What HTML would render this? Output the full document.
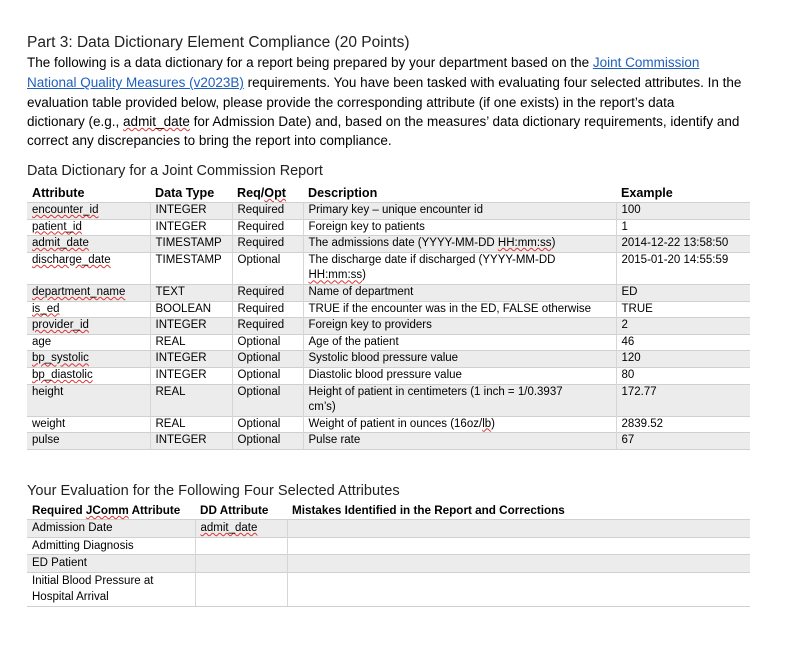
<!DOCTYPE html>
<html><head><meta charset="utf-8"><style>
body{margin:0;background:#fff;width:787px;height:652px;position:relative;font-family:"Liberation Sans",Arial,sans-serif;color:#000;overflow:hidden}
.l{position:absolute;left:27px;white-space:nowrap;font-size:13.5px}
a{color:#1f5fbf;text-decoration:underline}
.sq{text-decoration:underline wavy #d33;text-decoration-thickness:1px}
table{position:absolute;left:27px;border-collapse:collapse;table-layout:fixed;font-size:11.5px}
td,th{padding:0 5px;vertical-align:top;text-align:left;line-height:15.6px;border-right:1px solid #d6d6d6;white-space:nowrap}
td>*,td{position:relative}
.t td{top:0}
td:last-child,th:last-child{border-right:none}
th{font-size:12.6px;font-weight:bold;border:none;line-height:18px}
tr.r td{border-top:1px solid #d0d0d0}
tr.g td{background:#ececec}
table tr:last-child td{border-bottom:1px solid #d0d0d0}
.in{display:block;position:relative;top:1px}
.e td{line-height:16.5px}
</style></head><body>
<div class="l" style="top:34px;font-size:15.5px;color:#222">Part 3: Data Dictionary Element Compliance (20 Points)</div>
<div class="l" style="top:55px">The following is a data dictionary for a report being prepared by your department based on the <a>Joint Commission</a></div>
<div class="l" style="top:75px"><a>National Quality Measures (v2023B)</a> requirements. You have been tasked with evaluating four selected attributes. In the</div>
<div class="l" style="top:95px">evaluation table provided below, please provide the corresponding attribute (if one exists) in the report’s data</div>
<div class="l" style="top:114px">dictionary (e.g., <span class="sq">admit_date</span> for Admission Date) and, based on the measures’ data dictionary requirements, identify and</div>
<div class="l" style="top:133px">correct any discrepancies to bring the report into compliance.</div>

<div class="l" style="top:163px;font-size:14.4px;color:#222">Data Dictionary for a Joint Commission Report</div>
<table style="top:184px;width:723px">
<colgroup><col style="width:123px"><col style="width:82px"><col style="width:71px"><col style="width:313px"><col style="width:134px"></colgroup>
<tr><th>Attribute</th><th>Data Type</th><th>Req/<span class="sq">Opt</span></th><th>Description</th><th>Example</th></tr>
<tr class="r g"><td><span class="sq">encounter_id</span></td><td>INTEGER</td><td>Required</td><td>Primary key – unique encounter id</td><td>100</td></tr>
<tr class="r"><td><span class="sq">patient_id</span></td><td>INTEGER</td><td>Required</td><td>Foreign key to patients</td><td>1</td></tr>
<tr class="r g"><td><span class="sq">admit_date</span></td><td>TIMESTAMP</td><td>Required</td><td>The admissions date (YYYY-MM-DD <span class="sq">HH:mm:ss</span>)</td><td>2014-12-22 13:58:50</td></tr>
<tr class="r"><td><span class="sq">discharge_date</span></td><td>TIMESTAMP</td><td>Optional</td><td>The discharge date if discharged (YYYY-MM-DD<br><span class="sq">HH:mm:ss</span>)</td><td>2015-01-20 14:55:59</td></tr>
<tr class="r g"><td><span class="sq">department_name</span></td><td>TEXT</td><td>Required</td><td>Name of department</td><td>ED</td></tr>
<tr class="r"><td><span class="sq">is_ed</span></td><td>BOOLEAN</td><td>Required</td><td>TRUE if the encounter was in the ED, FALSE otherwise</td><td>TRUE</td></tr>
<tr class="r g"><td><span class="sq">provider_id</span></td><td>INTEGER</td><td>Required</td><td>Foreign key to providers</td><td>2</td></tr>
<tr class="r"><td>age</td><td>REAL</td><td>Optional</td><td>Age of the patient</td><td>46</td></tr>
<tr class="r g"><td><span class="sq">bp_systolic</span></td><td>INTEGER</td><td>Optional</td><td>Systolic blood pressure value</td><td>120</td></tr>
<tr class="r"><td><span class="sq">bp_diastolic</span></td><td>INTEGER</td><td>Optional</td><td>Diastolic blood pressure value</td><td>80</td></tr>
<tr class="r g"><td>height</td><td>REAL</td><td>Optional</td><td>Height of patient in centimeters (1 inch = 1/0.3937<br>cm’s)</td><td>172.77</td></tr>
<tr class="r"><td>weight</td><td>REAL</td><td>Optional</td><td>Weight of patient in ounces (16oz/<span class="sq">lb</span>)</td><td>2839.52</td></tr>
<tr class="r g"><td>pulse</td><td>INTEGER</td><td>Optional</td><td>Pulse rate</td><td>67</td></tr>
</table>

<div class="l" style="top:483px;font-size:14.6px;color:#222">Your Evaluation for the Following Four Selected Attributes</div>
<table class="e" style="top:503px;width:723px">
<colgroup><col style="width:168px"><col style="width:92px"><col style="width:463px"></colgroup>
<tr><th style="font-size:11.7px;line-height:16px">Required <span class="sq">JComm</span> Attribute</th><th style="font-size:11.7px;line-height:16px">DD Attribute</th><th style="font-size:11.7px;line-height:16px">Mistakes Identified in the Report and Corrections</th></tr>
<tr class="r g"><td>Admission Date</td><td><span class="sq">admit_date</span></td><td></td></tr>
<tr class="r"><td>Admitting Diagnosis</td><td></td><td></td></tr>
<tr class="r g"><td>ED Patient</td><td></td><td></td></tr>
<tr class="r"><td>Initial Blood Pressure at<br>Hospital Arrival</td><td></td><td></td></tr>
</table>
</body></html>
